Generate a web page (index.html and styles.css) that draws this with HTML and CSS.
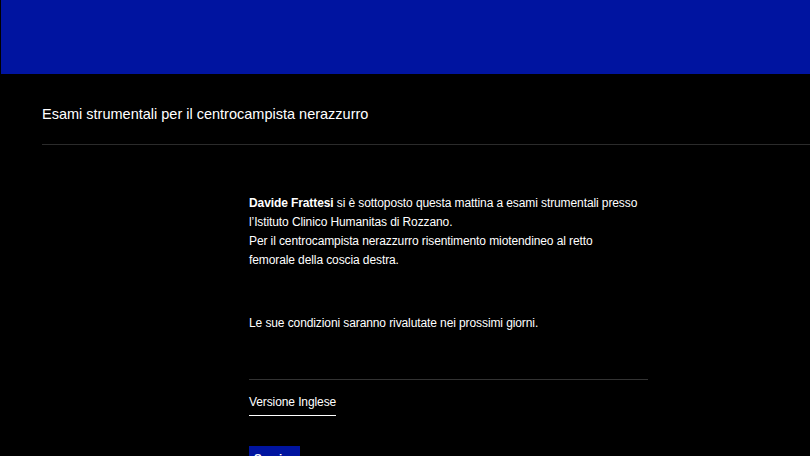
FILE: index.html
```html
<!DOCTYPE html>
<html lang="it">
<head>
<meta charset="utf-8">
<title>Esami strumentali</title>
<link rel="stylesheet" href="styles.css">
</head>
<body>
<header class="banner"></header>
<div class="title-bar">
  <h1 class="title">Esami strumentali per il centrocampista nerazzurro</h1>
</div>
<main class="article">
  <p class="para"><strong>Davide Frattesi</strong> si è sottoposto questa mattina a esami strumentali presso l’Istituto Clinico Humanitas di Rozzano.<br>Per il centrocampista nerazzurro risentimento miotendineo al retto femorale della coscia destra.</p>
  <p class="para para-second">Le sue condizioni saranno rivalutate nei prossimi giorni.</p>
  <div class="divider"></div>
  <div class="tabs"><span class="tab">Versione Inglese</span></div>
  <a class="button">Scarica</a>
</main>
</body>
</html>
```

FILE: styles.css
```css
html, body {
  margin: 0;
  padding: 0;
  background: #000;
  color: #fff;
  font-family: "Liberation Sans", Arial, sans-serif;
  overflow: hidden;
  height: 456px;
}
.banner {
  height: 74px;
  margin-left: 1px;
  background: #0014a0;
}
.title-bar {
  margin-left: 42px;
  border-bottom: 1px solid #2b2b2b;
  height: 71px;
  box-sizing: border-box;
  padding-top: 31px;
}
.title {
  margin: 0;
  font-size: 14.5px;
  font-weight: normal;
  line-height: 18px;
}
.article {
  width: 399px;
  margin-left: 249px;
  padding-top: 49px;
}
.para {
  margin: 0;
  max-width: 391px;
  font-size: 12px;
  letter-spacing: -0.1px;
  line-height: 19px;
}
.para strong {
  font-weight: bold;
}
.para-second {
  margin-top: 44px;
}
.divider {
  margin-top: 46px;
  height: 1px;
  background: #333;
}
.tabs {
  margin-top: 14px;
  display: flex;
}
.tab {
  font-size: 12px;
  letter-spacing: -0.1px;
  line-height: 16px;
  padding-bottom: 5px;
  border-bottom: 1px solid #fff;
}
.button {
  display: inline-block;
  margin-top: 30px;
  background: #0014a0;
  color: #fff;
  font-size: 11.5px;
  font-weight: bold;
  padding: 6px 5px;
}
```
